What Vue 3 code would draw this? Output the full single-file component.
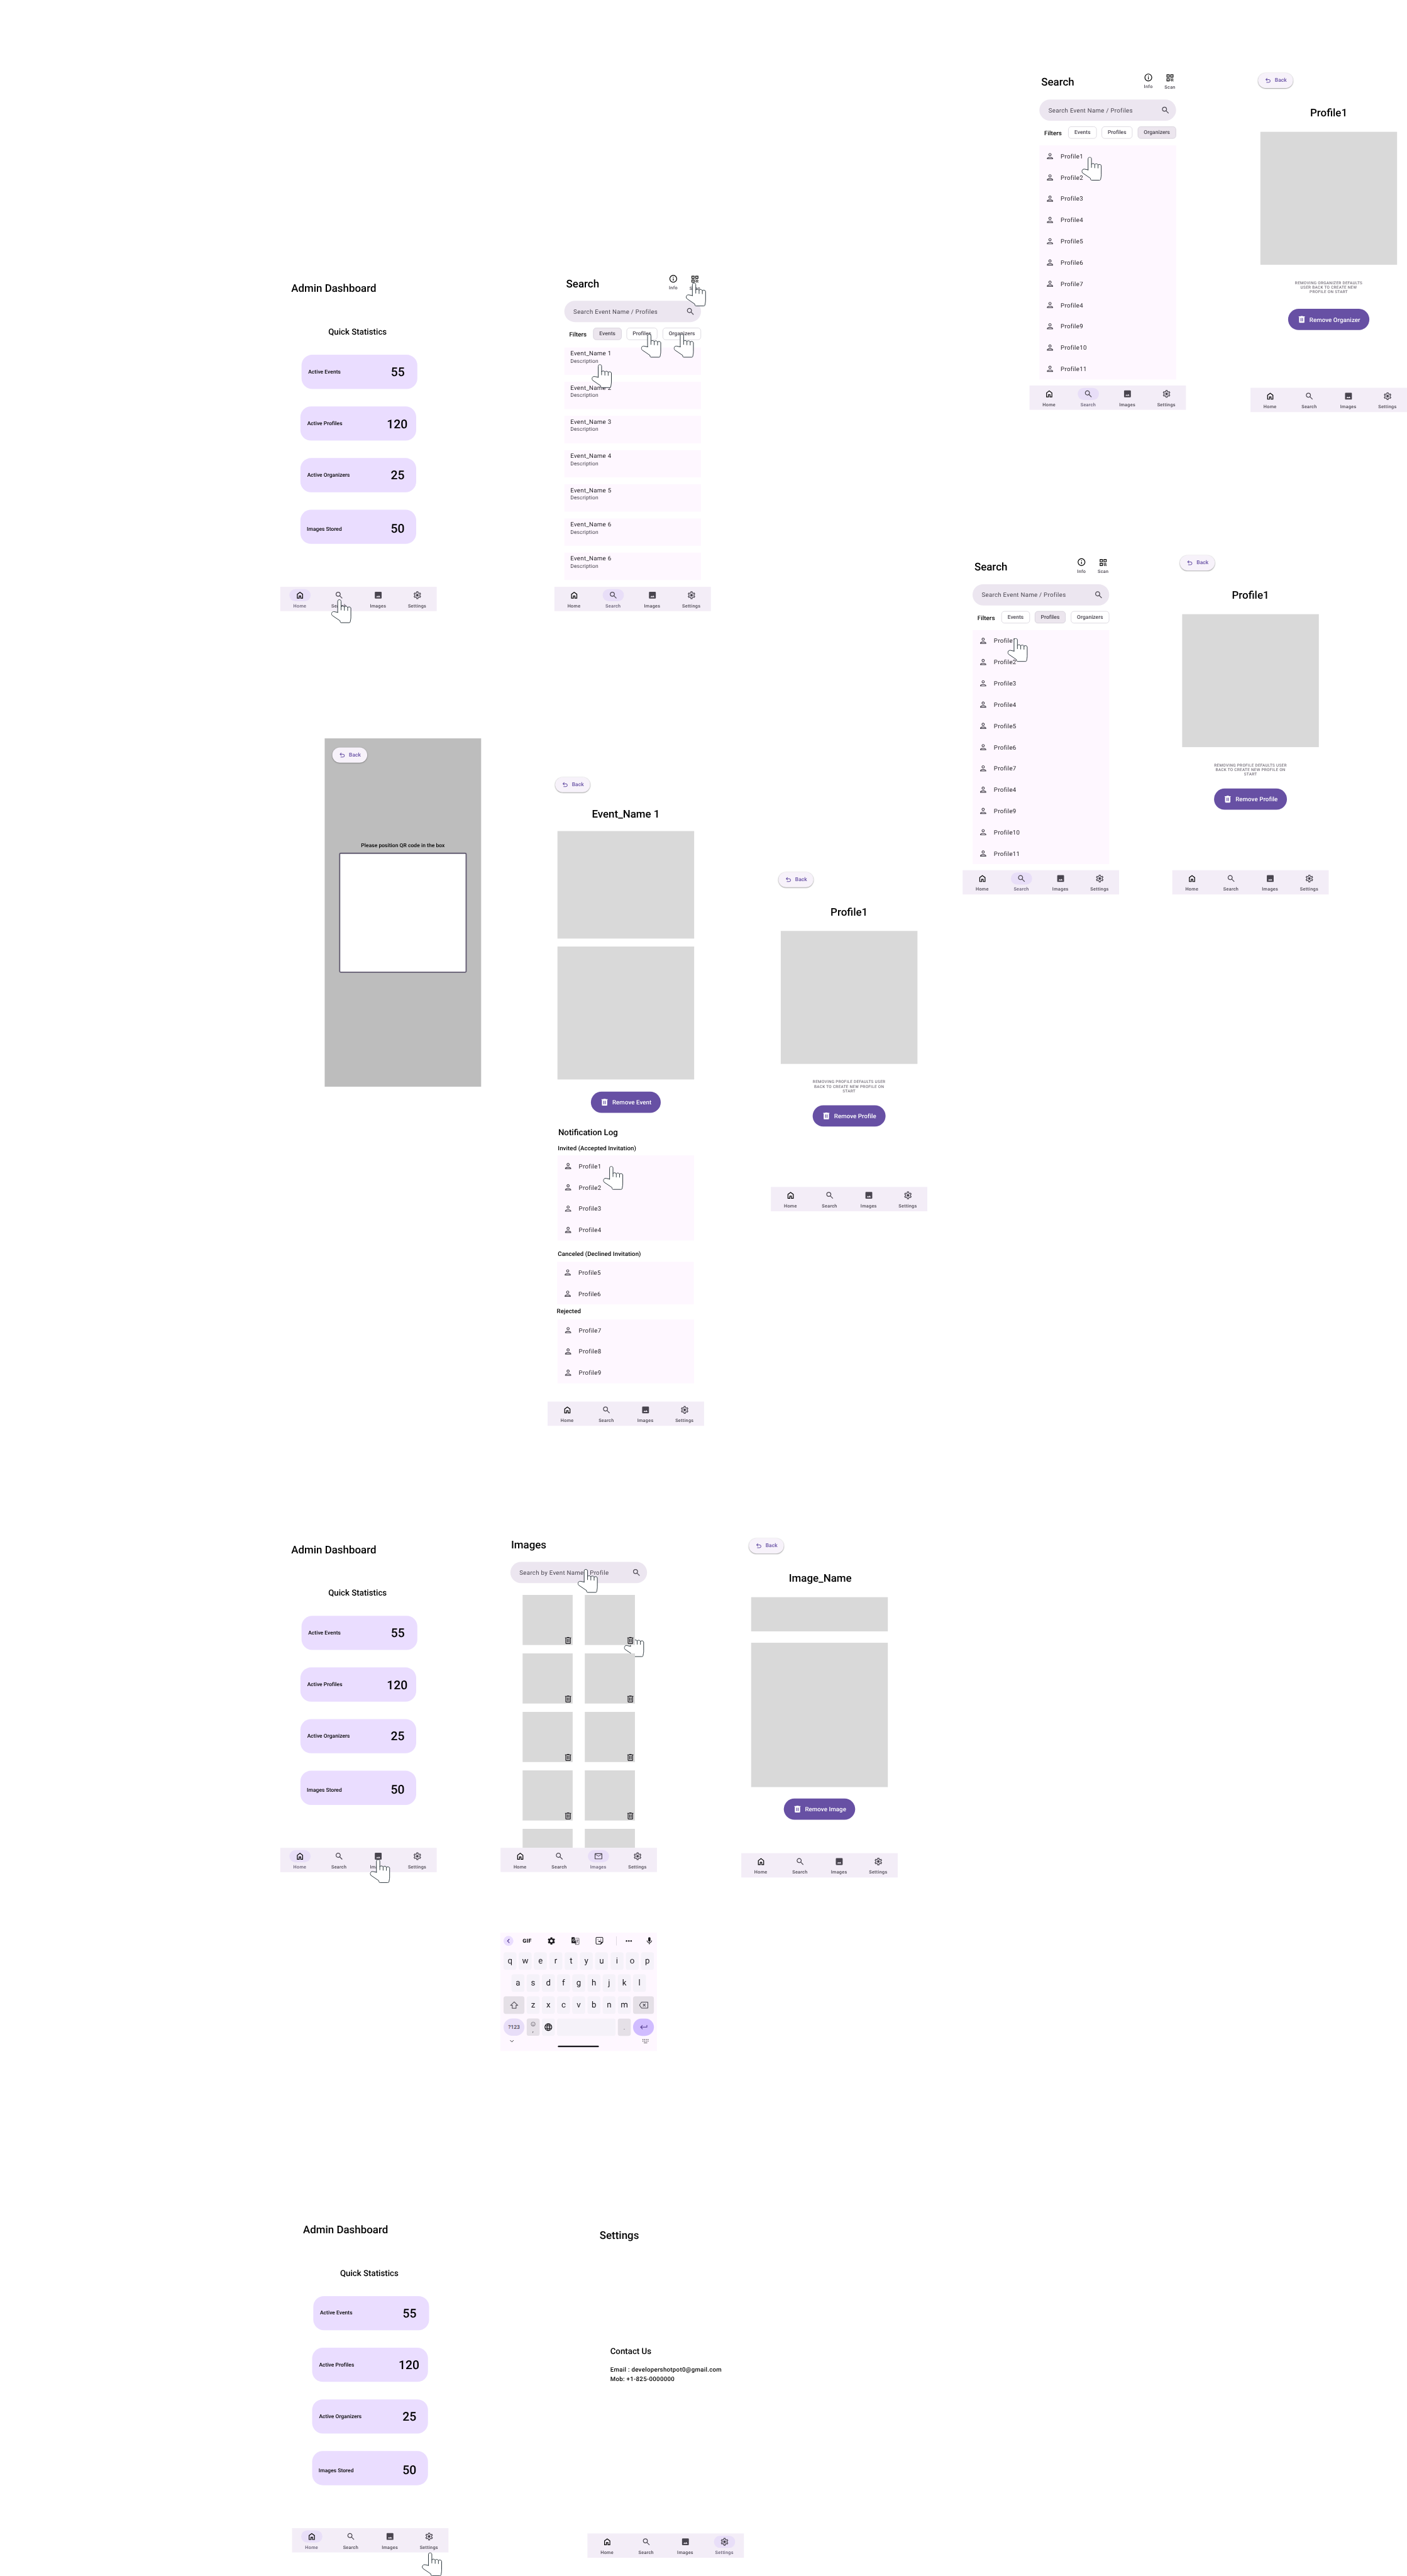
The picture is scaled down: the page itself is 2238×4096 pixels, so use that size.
<script setup>
import { h } from 'vue'

// Icon outlines: [viewBox, path, fill rule]
const SYM = '0 -960 960 960'
const MAT = '0 0 24 24'
const icons = {
  home: [SYM, 'M240-200h120v-240h240v240h120v-360L480-740 240-560v360Zm-80 80v-480l320-240 320 240v480H520v-240h-80v240H160Z'],
  search: [SYM, 'M784-120 532-372q-30 24-69 38t-83 14q-109 0-184.5-75.5T120-580q0-109 75.5-184.5T380-840q109 0 184.5 75.5T640-580q0 44-14 83t-38 69l252 252-56 56ZM380-400q75 0 127.5-52.5T560-580q0-75-52.5-127.5T380-760q-75 0-127.5 52.5T200-580q0 75 52.5 127.5T380-400Z'],
  image: [MAT, 'M5 3H19A2 2 0 0 1 21 5V19A2 2 0 0 1 19 21H5A2 2 0 0 1 3 19V5A2 2 0 0 1 5 3ZM6.500 17H17.500L14.200 12.800L11.500 16L9.500 13.500Z', 'evenodd'],
  settings: [MAT, 'M19.43 12.98c.04-.32.07-.64.07-.98 0-.34-.03-.66-.07-.98l2.11-1.65c.19-.15.24-.42.12-.64l-2-3.46c-.09-.16-.26-.25-.44-.25-.06 0-.12.01-.17.03l-2.49 1c-.52-.4-1.08-.73-1.69-.98l-.38-2.65C14.46 2.18 14.25 2 14 2h-4c-.25 0-.46.18-.49.42l-.38 2.65c-.61.25-1.17.59-1.69.98l-2.49-1c-.06-.02-.12-.03-.18-.03-.17 0-.34.09-.43.25l-2 3.46c-.13.22-.07.49.12.64l2.11 1.65c-.04.32-.07.65-.07.98 0 .33.03.66.07.98l-2.11 1.65c-.19.15-.24.42-.12.64l2 3.46c.09.16.26.25.44.25.06 0 .12-.01.17-.03l2.49-1c.52.4 1.08.73 1.69.98l.38 2.65c.03.24.24.42.49.42h4c.25 0 .46-.18.49-.42l.38-2.65c.61-.25 1.17-.59 1.69-.98l2.49 1c.06.02.12.03.18.03.17 0 .34-.09.43-.25l2-3.46c.12-.22.07-.49-.12-.64l-2.11-1.65zm-1.98-1.71c.04.31.05.52.05.73 0 .21-.02.43-.05.73l-.14 1.13.89.7 1.08.84-.7 1.21-1.27-.51-1.04-.42-.9.68c-.43.32-.84.56-1.25.73l-1.06.43-.16 1.13-.2 1.35h-1.4l-.19-1.35-.16-1.13-1.06-.43c-.43-.18-.83-.41-1.23-.71l-.91-.7-1.06.43-1.27.51-.7-1.21 1.08-.84.89-.7-.14-1.13c-.03-.31-.05-.54-.05-.74s.02-.43.05-.73l.14-1.13-.89-.7-1.08-.84.7-1.21 1.27.51 1.04.42.9-.68c.43-.32.84-.56 1.25-.73l1.06-.43.16-1.13.2-1.35h1.39l.19 1.35.16 1.13 1.06.43c.43.18.83.41 1.23.71l.91.7 1.06-.43 1.27-.51.7 1.21-1.07.85-.89.7.14 1.13zM12 8.500a3.500 3.500 0 1 0 0 7 3.500 3.500 0 0 0 0-7z', 'evenodd'],
  person: [MAT, 'M12 5.900a2.100 2.100 0 1 1 0 4.200 2.100 2.100 0 0 1 0-4.200zm0 10c2.700 0 5.800 1.290 6 2.100H6c.23-.72 3.310-2.100 6-2.100zM12 4C9.790 4 8 5.790 8 8s1.790 4 4 4 4-1.790 4-4-1.790-4-4-4zm0 10c-2.670 0-8 1.340-8 4v2h16v-2c0-2.660-5.330-4-8-4z', 'evenodd'],
  info: [MAT, 'M11 7h2v2h-2zm0 4h2v6h-2zm1-9C6.480 2 2 6.480 2 12s4.480 10 10 10 10-4.480 10-10S17.520 2 12 2zm0 18c-4.410 0-8-3.590-8-8s3.590-8 8-8 8 3.590 8 8-3.590 8-8 8z', 'evenodd'],
  qr: [MAT, 'M3 11h8V3H3v8zm2-6h4v4H5V5zM3 21h8v-8H3v8zm2-6h4v4H5v-4zM13 3v8h8V3h-8zm6 6h-4V5h4v4zM19 19h2v2h-2zM13 13h2v2h-2zM15 15h2v2h-2zM13 17h2v2h-2zM15 19h2v2h-2zM17 17h2v2h-2zM17 13h2v2h-2zM19 15h2v2h-2z', 'evenodd'],
  undo: [SYM, 'M280-200v-80h284q63 0 109.5-40T720-420q0-60-46.5-100T564-560H312l104 104-56 56-200-200 200-200 56 56-104 104h252q97 0 166.5 63T800-420q0 94-69.5 157T564-200H280Z'],
  trash: [SYM, 'M280-120q-33 0-56.5-23.5T200-200v-520h-40v-80h200v-40h240v40h200v80h-40v520q0 33-23.5 56.5T680-120H280Zm80-160h80v-360h-80v360Zm160 0h80v-360h-80v360Z', 'evenodd'],
  trashOutline: [SYM, 'M280-120q-33 0-56.5-23.5T200-200v-520h-40v-80h200v-40h240v40h200v80h-40v520q0 33-23.5 56.5T680-120H280Zm400-600H280v520h400v-520ZM360-280h80v-360h-80v360Zm160 0h80v-360h-80v360Z', 'evenodd'],
  mail: [SYM, 'M160-160q-33 0-56.5-23.5T80-240v-480q0-33 23.5-56.5T160-800h640q33 0 56.5 23.5T880-720v480q0 33-23.5 56.5T800-160H160Zm320-280L160-640v400h640v-400L480-440Zm0-80 320-200H160l320 200Z', 'evenodd'],
  gear: [MAT, 'M19.14 12.94c.04-.3.06-.61.06-.94 0-.32-.02-.64-.07-.94l2.03-1.58c.18-.14.23-.41.12-.61l-1.92-3.32c-.12-.22-.37-.29-.59-.22l-2.39.96c-.5-.38-1.03-.7-1.62-.94l-.36-2.54c-.04-.24-.24-.41-.48-.41h-3.84c-.24 0-.43.17-.47.41l-.36 2.54c-.59.24-1.13.57-1.62.94l-2.39-.96c-.22-.08-.47 0-.59.22L2.74 8.87c-.12.21-.08.47.12.61l2.03 1.58c-.05.3-.09.63-.09.94s.02.64.07.94l-2.03 1.58c-.18.14-.23.41-.12.61l1.92 3.32c.12.22.37.29.59.22l2.39-.96c.5.38 1.03.7 1.62.94l.36 2.54c.05.24.24.41.48.41h3.84c.24 0 .44-.17.47-.41l.36-2.54c.59-.24 1.13-.56 1.62-.94l2.39.96c.22.08.47 0 .59-.22l1.92-3.32c.12-.22.07-.47-.12-.61l-2.01-1.58zM12 15.6c-1.98 0-3.6-1.62-3.6-3.6s1.62-3.6 3.6-3.6 3.6 1.62 3.6 3.6-1.62 3.6-3.6 3.6z'],
  mic: [MAT, 'M12 14c1.660 0 3-1.340 3-3V5c0-1.660-1.340-3-3-3S9 3.340 9 5v6c0 1.660 1.340 3 3 3zm5.300-3c0 3-2.540 5.100-5.300 5.100S6.700 14 6.700 11H5c0 3.410 2.720 6.230 6 6.720V21h2v-3.280c3.280-.48 6-3.300 6-6.720h-1.700z'],
  globe: [MAT, 'M11.99 2C6.47 2 2 6.48 2 12s4.47 10 9.99 10C17.52 22 22 17.52 22 12S17.52 2 11.99 2zm6.93 6h-2.95c-.32-1.25-.78-2.45-1.38-3.56 1.84.63 3.37 1.91 4.33 3.56zM12 4.04c.83 1.2 1.48 2.53 1.91 3.96h-3.82c.43-1.43 1.08-2.76 1.91-3.96zM4.26 14C4.1 13.36 4 12.69 4 12s.1-1.36.26-2h3.38c-.08.66-.14 1.32-.14 2 0 .68.06 1.34.14 2H4.26zm.82 2h2.95c.32 1.25.78 2.45 1.38 3.56-1.84-.63-3.37-1.9-4.33-3.56zm2.95-8H5.08c.96-1.66 2.49-2.93 4.33-3.56C8.81 5.55 8.35 6.75 8.03 8zM12 19.96c-.83-1.2-1.48-2.53-1.91-3.96h3.82c-.43 1.43-1.08 2.76-1.91 3.96zM14.34 14H9.66c-.09-.66-.16-1.32-.16-2 0-.68.07-1.35.16-2h4.68c.09.65.16 1.32.16 2 0 .68-.07 1.34-.16 2zm.25 5.56c.6-1.11 1.06-2.31 1.38-3.56h2.95c-.96 1.65-2.49 2.93-4.33 3.56zM16.36 14c.08-.66.14-1.32.14-2 0-.68-.06-1.34-.14-2h3.38c.16.64.26 1.31.26 2s-.1 1.36-.26 2h-3.38z']
}

const Icon = ({ name }) => {
  const [viewBox, d, rule] = icons[name]
  return h('svg', { class: 'icon', viewBox, fill: 'currentColor' }, [
    h('path', { d, 'fill-rule': rule || 'nonzero' })
  ])
}
Icon.props = ['name']

const Hand = ({ x, y }) =>
  h('svg', { class: 'hand', viewBox: '0 0 54 63', style: { left: x + 'px', top: y + 'px' } }, [
    h('path', {
      d: 'M17.300 34.200V5.500C17.300 2.500 19.200.9 21.700.9S26.200 2.500 26.200 5.500V19.500C28 16.800 33.500 16.800 34.900 20.300C37 17.300 42.200 17.800 43.500 21.300C45.500 19 51 19.300 52 23V46C52 51 51.300 53 50.600 57.500C50.300 60.500 49.500 61.400 47 61.400H27C24.500 61.400 23.600 60 23.600 56.500L3 42.500C.8 40.500.6 37.500 1.600 35.500C2.800 32.800 5.500 31.900 8.500 32.400L17.300 34.200ZM26.200 19.500V28M34.900 20.300V29M43.500 21.300V29.500',
      fill: '#fff', stroke: '#263238', 'stroke-width': 1.6, 'stroke-linejoin': 'round', 'stroke-linecap': 'round'
    })
  ])
Hand.props = ['x', 'y']

const tabs = [
  { label: 'Home', icon: 'home' },
  { label: 'Search', icon: 'search' },
  { label: 'Images', icon: 'image' },
  { label: 'Settings', icon: 'settings' }
]
const tabIcon = (tab, active) => (tab.label === 'Images' && active ? 'mail' : tab.icon)

const stats = [
  { label: 'Active Events', value: '55', shift: 3, left: 17.5, right: 6.5, drop: 0 },
  { label: 'Active Profiles', value: '120', shift: 0, left: 18, right: 5, drop: 1 },
  { label: 'Active Organizers', value: '25', shift: 0, left: 18, right: 4, drop: -1 },
  { label: 'Images Stored', value: '50', shift: 0, left: 17, right: 4, drop: 9 }
]
const events = [1, 2, 3, 4, 5, 6, 6]
const chips = [
  { label: 'Events', width: 75 },
  { label: 'Profiles', width: 81 },
  { label: 'Organizers', width: 101 }
]
const profiles = [1, 2, 3, 4, 5, 6, 7, 4, 9, 10, 11].map((n) => 'Profile' + n)

const dashboards = [
  { x: 738, y: 692 },
  { x: 738, y: 4012 },
  { x: 769, y: 5803 }
]
const searches = [
  { x: 1460, y: 692, filter: 'Events' },
  { x: 2711, y: 162, filter: 'Organizers' },
  { x: 2535, y: 1438, filter: 'Profiles' }
]
const details = [
  { x: 3293, y: 168, kind: 'Organizer', note: ['REMOVING ORGANIZER DEFAULTS', 'USER BACK TO CREATE NEW', 'PROFILE ON START'] },
  { x: 3087, y: 1438, kind: 'Profile', note: ['REMOVING PROFILE DEFAULTS USER', 'BACK TO CREATE NEW PROFILE ON', 'START'] },
  { x: 2030, y: 2272, kind: 'Profile', note: ['REMOVING PROFILE DEFAULTS USER', 'BACK TO CREATE NEW PROFILE ON', 'START'] }
]
const logs = [
  { title: 'Invited (Accepted Invitation)', cls: 'invited', people: ['Profile1', 'Profile2', 'Profile3', 'Profile4'] },
  { title: 'Canceled (Declined Invitation)', cls: 'canceled', people: ['Profile5', 'Profile6'] },
  { title: 'Rejected', cls: 'rejected', people: ['Profile7', 'Profile8', 'Profile9'] }
]
const hands = [
  [872.3, 1578], [1806, 743.9], [1688, 879], [1774, 879], [1558, 959.2],
  [2848, 413.3], [2653, 1680.2], [1588, 3069.8], [1521, 4131], [973.5, 4895], [1111, 6720]
]
const at = (s) => ({ left: s.x + 'px', top: s.y + 'px' })
</script>

<template>
  <div class="viewport">
    <div class="canvas">
      <section v-for="(s, i) in dashboards" :key="'d' + i" class="screen dashboard" :style="at(s)">
        <h1>Admin Dashboard</h1>
        <h2>Quick Statistics</h2>
        <div class="stats">
          <div v-for="c in stats" :key="c.label" class="stat" :style="{ marginLeft: c.shift + 'px', paddingLeft: c.left + 'px', paddingRight: c.right + 'px' }">
            <span class="stat-label" :style="{ paddingTop: (c.drop > 2 ? 11 : 0) + 'px' }">{{ c.label }}</span>
            <span class="stat-value" :style="{ marginTop: c.drop + 'px' }">{{ c.value }}</span>
          </div>
        </div>
        <nav class="nav">
          <div v-for="t in tabs" :key="t.label" class="tab" :class="{ active: t.label === 'Home' }">
            <span class="pill" :class="'pill-' + t.icon"><Icon :name="t.icon" /></span><span class="tab-label">{{ t.label }}</span>
          </div>
        </nav>
      </section>

      <section v-for="(s, i) in searches" :key="'s' + i" class="screen search-screen" :style="at(s)">
        <header class="search-head">
          <h1>Search</h1>
          <div class="action"><Icon name="info" /><span>Info</span></div>
          <div class="action scan"><Icon name="qr" /><span>Scan</span></div>
        </header>
        <div class="searchbar"><span>Search Event Name / Profiles</span><Icon name="search" /></div>
        <div class="filters">
          <b>Filters</b>
          <span v-for="c in chips" :key="c.label" class="chip" :class="{ on: c.label === s.filter }" :style="{ width: c.width + 'px' }">{{ c.label }}</span>
        </div>
        <div v-if="s.filter === 'Events'" class="events">
          <div v-for="(n, k) in events" :key="k" class="event">
            <span class="event-name">Event_Name {{ n }}</span>
            <span class="event-desc">Description</span>
          </div>
        </div>
        <div v-else class="people">
          <div v-for="(p, k) in profiles" :key="k" class="person"><Icon name="person" /><span>{{ p }}</span></div>
        </div>
        <nav class="nav">
          <div v-for="t in tabs" :key="t.label" class="tab" :class="{ active: t.label === 'Search' }">
            <span class="pill" :class="'pill-' + t.icon"><Icon :name="t.icon" /></span><span class="tab-label">{{ t.label }}</span>
          </div>
        </nav>
      </section>

      <section v-for="(s, i) in details" :key="'p' + i" class="screen detail" :class="'of-' + s.kind.toLowerCase()" :style="at(s)">
        <div class="back"><Icon name="undo" />Back</div>
        <h1>Profile1</h1>
        <div class="block photo"></div>
        <p class="note"><span v-for="l in s.note" :key="l">{{ l }}</span></p>
        <div class="remove"><Icon name="trash" />Remove {{ s.kind }}</div>
        <nav class="nav">
          <div v-for="t in tabs" :key="t.label" class="tab">
            <span class="pill" :class="'pill-' + t.icon"><Icon :name="t.icon" /></span><span class="tab-label">{{ t.label }}</span>
          </div>
        </nav>
      </section>

      <section class="screen scanner">
        <div class="back"><Icon name="undo" />Back</div>
        <p>Please position QR code in the box</p>
        <div class="qr-box"></div>
      </section>

      <section class="screen detail event-detail">
        <div class="back"><Icon name="undo" />Back</div>
        <h1>Event_Name 1</h1>
        <div class="block poster"></div>
        <div class="block photo"></div>
        <div class="remove"><Icon name="trash" />Remove Event</div>
        <h2>Notification Log</h2>
        <div v-for="g in logs" :key="g.title" class="log" :class="g.cls">
          <h3>{{ g.title }}</h3>
          <div class="people">
            <div v-for="p in g.people" :key="p" class="person"><Icon name="person" /><span>{{ p }}</span></div>
          </div>
        </div>
        <nav class="nav">
          <div v-for="t in tabs" :key="t.label" class="tab">
            <span class="pill" :class="'pill-' + t.icon"><Icon :name="t.icon" /></span><span class="tab-label">{{ t.label }}</span>
          </div>
        </nav>
      </section>

      <Hand :x="1643.3" :y="4300" />
      <section class="screen gallery">
        <h1>Images</h1>
        <div class="searchbar"><span>Search by Event Name / Profile</span><Icon name="search" /></div>
        <div class="tiles">
          <div v-for="n in 10" :key="n" class="tile"><Icon v-if="n < 9" name="trashOutline" /></div>
        </div>
        <nav class="nav">
          <div v-for="t in tabs" :key="t.label" class="tab" :class="{ active: t.label === 'Images' }">
            <span class="pill" :class="'pill-' + t.icon"><Icon :name="tabIcon(t, t.label === 'Images')" /></span><span class="tab-label">{{ t.label }}</span>
          </div>
        </nav>
      </section>

      <section class="screen detail image-detail">
        <div class="back"><Icon name="undo" />Back</div>
        <h1>Image_Name</h1>
        <div class="block caption"></div>
        <div class="block picture"></div>
        <div class="remove"><Icon name="trash" />Remove Image</div>
        <nav class="nav">
          <div v-for="t in tabs" :key="t.label" class="tab">
            <span class="pill" :class="'pill-' + t.icon"><Icon :name="t.icon" /></span><span class="tab-label">{{ t.label }}</span>
          </div>
        </nav>
      </section>

      <section class="keyboard">
        <div class="tools">
          <span class="tool collapse"><svg viewBox="0 0 26 26"><path d="M15.500 8l-5 5.200 5 5.200" /></svg></span>
          <span class="tool gif">GIF</span>
          <span class="tool"><Icon name="gear" /></span>
          <span class="tool translate">
            <svg viewBox="0 0 24 24">
              <path d="M12.500 5H20.500a1.300 1.300 0 0 1 1.300 1.300V20a1.300 1.300 0 0 1-1.300 1.300H12.500L11 16.500M12.500 21.300L14.500 17.500" fill="none" stroke="#1d1b20" stroke-width="1" />
              <path d="M3.500 2H9.800L14.500 18H3.500A1.500 1.500 0 0 1 2 16.500V3.500A1.500 1.500 0 0 1 3.500 2Z" fill="#1d1b20" />
              <path d="M14 10H20M17 8.600V10M18.800 10C18.200 13 16.300 15 14.300 16.300M15 11.500C16 13.800 17.500 15.500 19.300 17" fill="none" stroke="#1d1b20" stroke-width="1" />
              <path d="M9.700 8.300A2.900 2.900 0 1 0 10.200 10.500H7.400" fill="none" stroke="#fff" stroke-width="1.300" />
            </svg>
          </span>
          <span class="tool sticker">
            <svg viewBox="0 0 24 24" fill="none" stroke="#1d1b20" stroke-width="1.700">
              <path d="M4.500 2.500H18.500A2 2 0 0 1 20.500 4.500V15L15 20.500H4.500A2 2 0 0 1 2.500 18.500V4.500A2 2 0 0 1 4.500 2.500Z" />
              <path d="M15 20.500V17A2 2 0 0 1 17 15H20.500Z" fill="#1d1b20" stroke-width="1" />
              <path d="M6.500 8.500C7 7.400 8.500 7.400 9.100 8.400M13.500 7.600L16.200 7" stroke-width="1.300" />
              <path d="M8 12.200C10.500 13 13.500 12.500 16 11.300C15 14.800 10 16 8 12.200Z" fill="#1d1b20" stroke-width=".8" />
            </svg>
          </span>
          <i class="rule"></i>
          <span class="tool dots"><i></i><i></i><i></i></span>
          <span class="tool mic"><Icon name="mic" /></span>
        </div>
        <div class="keys"><span v-for="k in 'qwertyuiop'" :key="k" class="key">{{ k }}</span></div>
        <div class="keys middle"><span v-for="k in 'asdfghjkl'" :key="k" class="key">{{ k }}</span></div>
        <div class="keys">
          <span class="key wide dark"><svg viewBox="0 0 24 24"><path d="M12 3.500L21 12.300H17V20.300H7V12.300H3Z" /></svg></span>
          <span v-for="k in 'zxcvbnm'" :key="k" class="key">{{ k }}</span>
          <span class="key wide dark"><svg viewBox="0 0 24 24"><path d="M6.500 4H22A1 1 0 0 1 23 5V19A1 1 0 0 1 22 20H6.500L1 12ZM10 8.500L17 15.500M17 8.500L10 15.500" /></svg></span>
        </div>
        <div class="keys">
          <span class="key wide symbols">?123</span>
          <span class="key dark emoji">
            <svg viewBox="0 0 14 14"><circle cx="7" cy="7" r="5.400" /><path d="M4.300 8.300C5.300 10.500 8.700 10.500 9.700 8.300M5.100 5V6.200M8.900 5V6.200" /></svg>
            <em>,</em>
          </span>
          <span class="key"><Icon name="globe" /></span>
          <span class="key space"></span>
          <span class="key dark dot">.</span>
          <span class="key wide enter"><svg viewBox="0 0 24 24"><path d="M20.500 6.500V12H4M9 7L4 12L9 17" /></svg></span>
        </div>
        <div class="foot">
          <svg viewBox="0 0 12 12"><path d="M1.500 3.500L6 8L10.500 3.500" /></svg>
          <i class="homebar"></i>
          <svg class="board" viewBox="0 0 18 12"><path d="M1 2H17M1 6.200H17" stroke-dasharray="2 2.500" /><path d="M4.500 10.300H13.500" stroke-width="1.200" /></svg>
        </div>
      </section>

      <section class="screen settings-screen">
        <h1>Settings</h1>
        <h2>Contact Us</h2>
        <p>Email : developershotpot0@gmail.com</p>
        <p>Mob: +1-825-0000000</p>
        <nav class="nav">
          <div v-for="t in tabs" :key="t.label" class="tab" :class="{ active: t.label === 'Settings' }">
            <span class="pill" :class="'pill-' + t.icon"><Icon :name="t.icon" /></span><span class="tab-label">{{ t.label }}</span>
          </div>
        </nav>
      </section>

      <Hand v-for="(p, i) in hands" :key="'h' + i" :x="p[0]" :y="p[1]" />
    </div>
  </div>
</template>

<style>
body { margin: 0; background: #fff; }
</style>

<style scoped>
.viewport { position: relative; width: 2238px; height: 4096px; overflow: hidden; background: #fff; font-family: Roboto, "Liberation Sans", sans-serif; text-rendering: geometricPrecision; }
.canvas { position: relative; width: 3705px; height: 6782px; transform: scale(.60403, .60395); transform-origin: 0 0; }
.screen { position: absolute; box-sizing: border-box; width: 412px; height: 917px; display: flex; flex-direction: column; color: #000; }
h1, h2, h3, p { margin: 0; font-weight: 500; white-space: nowrap; }
h1 { font-size: 28px; line-height: 36px; }
h2 { font-size: 22px; line-height: 28px; }
h3 { font-size: 16px; line-height: 24px; letter-spacing: .15px; }
.icon { display: block; flex: none; width: 24px; height: 24px; }
.hand { position: absolute; width: 54px; height: 63px; }

.nav { display: flex; margin-top: auto; height: 64px; flex: none; background: #f3edf7; color: #49454f; }
.tab { width: 103px; padding-top: 6px; display: flex; flex-direction: column; align-items: center; }
.pill { display: flex; justify-content: center; align-items: center; width: 56px; height: 32px; border-radius: 16px; }
.pill-home { color: #000; }
.tab-label { margin-top: 4px; font-size: 12px; line-height: 16px; font-weight: 500; letter-spacing: .5px; }
.active .pill { background: #e8def8; }
.active .tab-label { color: #625b71; }

.dashboard { padding-top: 49.500px; }
.dashboard h1 { margin-left: 29px; }
.dashboard h2 { margin: 83px 0 0 126.500px; }
.stats { margin: 45.500px 0 0 53px; display: flex; flex-direction: column; gap: 46px; }
.stat { box-sizing: border-box; width: 305px; height: 90px; border-radius: 28px; background: #eaddff; display: flex; align-items: center; }
.stat-label { flex: 1; font-size: 14px; line-height: 20px; font-weight: 500; letter-spacing: .1px; }
.stat-value { width: 90px; text-align: center; font-size: 32px; line-height: 40px; font-weight: 500; }

.search-screen { padding-top: 29.500px; }
.search-head { display: flex; height: 70.500px; padding-left: 31px; }
.search-head h1 { flex: 1; padding-top: 7px; }
.action { width: 57px; display: flex; flex-direction: column; align-items: center; font-size: 12px; line-height: 16px; font-weight: 500; letter-spacing: .5px; color: #000; }
.action span { margin-top: 4.500px; color: #49454f; }
.action.scan { padding-top: 1px; margin-right: 13.500px; }
.searchbar { box-sizing: border-box; width: 360px; height: 56px; flex: none; margin-left: 26px; padding: 0 16px 0 24px; border-radius: 28px; background: #ece6f0; color: #49454f; display: flex; justify-content: space-between; align-items: center; font-size: 16px; letter-spacing: .5px; }
.filters { display: flex; align-items: center; height: 32px; flex: none; margin: 15px 0 0 39px; }
.filters b { width: 63px; padding-top: 4px; font-size: 16px; line-height: 24px; font-weight: 500; letter-spacing: .15px; }
.chip { box-sizing: border-box; height: 32px; border: 1px solid #cac4d0; border-radius: 8px; display: flex; align-items: center; justify-content: center; font-size: 14px; font-weight: 500; letter-spacing: .1px; color: #49454f; }
.chip + .chip { margin-left: 13px; }
.chip:last-child { margin-left: 14px; }
.chip.on { background: #ece6ee; }
.events { display: flex; flex-direction: column; gap: 18px; margin: 20px 0 0 26px; }
.event { box-sizing: border-box; width: 360px; height: 72px; padding: 4px 0 0 16px; background: #fef7ff; display: flex; flex-direction: column; }
.event-name { font-size: 16px; line-height: 23px; letter-spacing: .5px; color: #1d1b20; }
.event-desc { font-size: 14px; line-height: 19px; letter-spacing: .25px; color: #49454f; }
.people { width: 360px; background: #fef7ff; }
.search-screen .people { margin: 18px 0 0 26px; }
.person { display: flex; align-items: center; gap: 16px; height: 56px; padding-left: 16px; font-size: 16px; letter-spacing: .5px; color: #1d1b20; }
.person .icon { color: #49454f; }

.back { box-sizing: border-box; width: 92px; height: 40px; flex: none; margin: 24px 0 0 20px; padding-left: 16px; border-radius: 20px; background: #f7f2fa; box-shadow: 0 1px 2px rgba(0, 0, 0, .3), 0 1px 3px 1px rgba(0, 0, 0, .15); display: flex; align-items: center; gap: 8px; color: #6750a4; font-size: 14px; font-weight: 500; letter-spacing: .1px; }
.back .icon { width: 20px; height: 20px; }
.detail h1 { margin-top: 47px; align-self: center; }
.block { width: 360px; flex: none; margin-left: 26px; background: #d9d9d9; }
.detail .photo { height: 350px; margin-top: 32px; }
.note { align-self: center; margin-top: 42px; display: flex; flex-direction: column; align-items: center; font-size: 10.500px; line-height: 12px; letter-spacing: .5px; color: #79747e; }
.remove { align-self: center; height: 56px; margin-top: 38px; padding: 0 24px; border-radius: 28px; background: #6750a4; color: #fff; display: flex; align-items: center; gap: 8px; font-size: 16px; font-weight: 500; letter-spacing: .15px; }
.of-profile .remove { margin-top: 31px; }

.scanner { left: 855px; top: 1944px; background: #bdbdbd; }
.scanner p { align-self: center; margin-top: 209px; font-size: 14px; line-height: 20px; letter-spacing: .1px; }
.qr-box { box-sizing: border-box; width: 336px; height: 316px; margin: 8px 0 0 38px; border: 3px solid #625b71; border-radius: 4px; background: #fff; }

.event-detail { left: 1442px; top: 2022px; height: 1732px; }
.event-detail h1 { margin-top: 38.500px; }
.poster { height: 283px; margin-top: 27.500px; }
.event-detail .photo { margin-top: 21px; }
.event-detail .remove { margin-top: 32px; }
.event-detail h2 { margin: 38px 0 0 28px; }
.log { margin-left: 26px; }
.log h3 { margin-left: 1px; }
.invited { margin-top: 15px; }
.invited h3 { margin-bottom: 7px; }
.canceled { margin: 23px 0 0 25px; }
.canceled h3 { margin: 0 0 9px 2px; }
.rejected { margin-top: 7px; }
.rejected h3 { margin: 0 0 9px -2px; }

.gallery { left: 1318px; top: 4012px; padding-top: 36.500px; overflow: hidden; }
.gallery h1 { margin-left: 28px; }
.gallery .searchbar { margin-top: 27.500px; }
.tiles { flex: 1; min-height: 0; overflow: hidden; margin: 31px 0 0 58px; display: grid; grid-template-columns: 132px 132px; grid-auto-rows: 132px; gap: 22px 32px; color: #1d1b20; }
.tile { display: flex; justify-content: flex-end; align-items: flex-end; background: #d9d9d9; }
.gallery .nav { margin-top: 0; }

.image-detail { left: 1952px; top: 4026px; }
.image-detail h1 { margin-left: 4px; }
.caption { height: 90px; margin-top: 32px; }
.picture { height: 380px; margin-top: 30px; }
.image-detail .remove { margin-top: 30px; }

.settings-screen { left: 1547px; top: 5817px; padding: 49.500px 0 0 32px; }
.settings-screen h2 { margin: 275px 0 21px 28px; }
.settings-screen p { margin-left: 28px; font-size: 16px; line-height: 24px; letter-spacing: .5px; }
.settings-screen .nav { margin-left: -32px; }

.keyboard { position: absolute; left: 1318px; top: 5088px; box-sizing: border-box; width: 412px; height: 312px; padding: 0 8px; background: #fef7ff; display: flex; flex-direction: column; gap: 12px; color: #1d1b20; }
.tools { display: flex; align-items: center; height: 44px; margin: 0 0 -4px; }
.tool { display: flex; align-items: center; justify-content: center; flex: none; width: 24px; margin-left: 39.700px; }
.tool svg { width: 24px; height: 24px; }
.collapse { width: 26px; height: 26px; margin-left: 0; border-radius: 13px; background: #eaddff; }
.collapse svg { fill: none; stroke: #4f378b; stroke-width: 2; width: 26px; height: 26px; }
.gif { margin-left: 24px; font-size: 14.500px; font-weight: 900; letter-spacing: .4px; }
.rule { width: 1px; height: 24px; margin-left: 32px; background: #cac4d0; }
.dots { width: 16px; margin-left: 24px; gap: 2px; }
.mic { margin-left: 34px; }
.dots i { width: 4px; height: 4px; border-radius: 2px; background: #1d1b20; }
.keys { display: flex; justify-content: space-between; }
.keys.middle { padding: 0 21px; }
.key { width: 34px; height: 46px; border-radius: 6px; background: #f5f2f9; display: flex; align-items: center; justify-content: center; font-size: 22px; }
.key.wide { width: 55px; }
.key.dark { background: #e5e0e7; }
.key.wide svg { width: 24px; height: 24px; fill: none; stroke: #49454f; stroke-width: 1.700; }
.key.symbols { border-radius: 23px; background: #e8def8; color: #49454f; font-size: 14px; font-weight: 500; }
.key.space { width: 154px; }
.key.enter { border-radius: 23px; background: #d0bcff; }
.key.enter svg { stroke: #4f378b; }
.key.emoji { flex-direction: column; color: #49454f; }
.key.emoji svg { width: 14px; height: 14px; fill: none; stroke: #49454f; stroke-width: 1; }
.key.emoji em { font-size: 16px; line-height: 16px; }
.key.dot { font-size: 16px; color: #49454f; }
.foot { display: flex; justify-content: space-between; padding: 0 13px 0 16px; margin-top: -4px; }
.foot svg { width: 12px; height: 12px; fill: none; stroke: #1d1b20; stroke-width: 1.500; }
.foot .board { width: 18px; stroke-width: 2; }
.homebar { align-self: flex-end; width: 108px; height: 4px; margin-bottom: -10px; border-radius: 2px; background: #1d1b20; }
</style>
